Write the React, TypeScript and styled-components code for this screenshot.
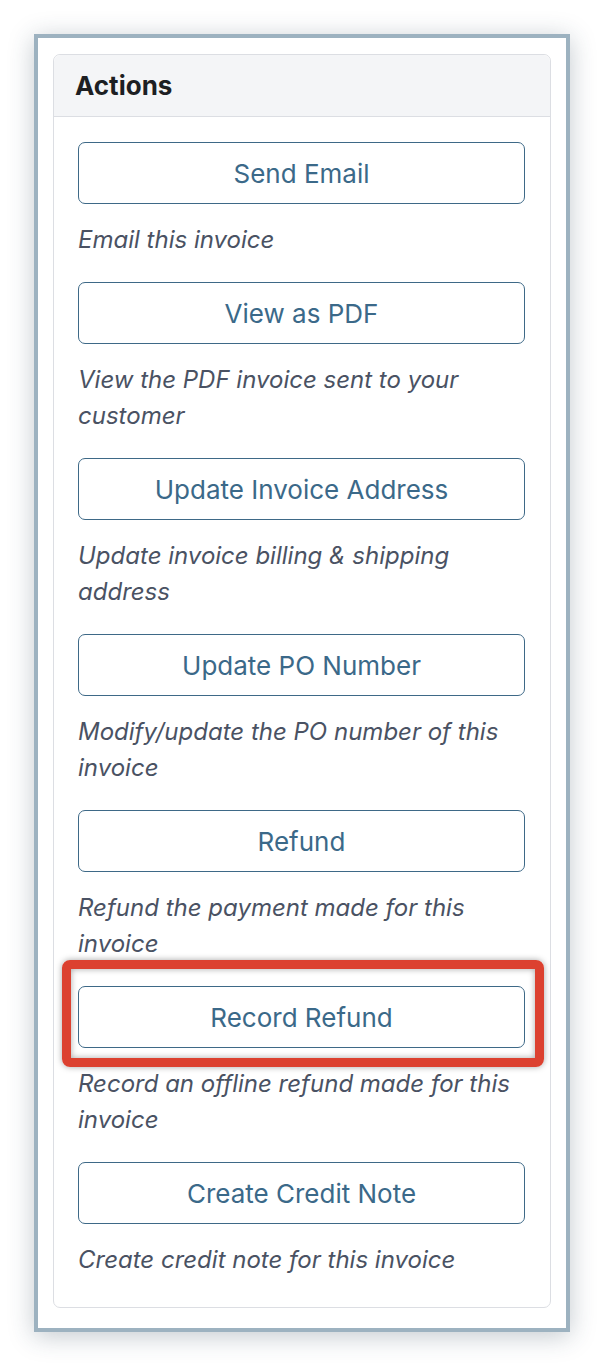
import React from 'react';
import styled, { createGlobalStyle } from 'styled-components';

const GlobalStyle = createGlobalStyle`
  html, body {
    margin: 0;
    padding: 0;
    background: #ffffff;
  }
  body {
    font-family: Inter, "Noto Sans", "Liberation Sans", sans-serif;
    -webkit-font-smoothing: antialiased;
  }
`;

const Page = styled.div`
  padding: 34px;
  width: 536px;
`;

const Frame = styled.div`
  border: 4px solid #9db2c0;
  background: #ffffff;
  padding: 16px 15px 20px 15px;
  box-shadow: 0 4px 24px rgba(40, 60, 80, 0.28);
`;

const Card = styled.section`
  border: 1px solid #dcdee3;
  border-radius: 7px;
  background: #ffffff;
`;

const Header = styled.header`
  height: 61px;
  display: flex;
  align-items: center;
  padding: 0 21px;
  background: #f4f5f7;
  border-bottom: 1px solid #dcdee3;
  border-radius: 7px 7px 0 0;
`;

const Title = styled.h2`
  margin: 0;
  font-size: 26px;
  font-weight: 700;
  color: #1d1f23;
`;

const Body = styled.div`
  display: flex;
  flex-direction: column;
  padding: 25px 25px 5px 24px;
`;

const Item = styled.div`
  display: flex;
  flex-direction: column;
`;

const ButtonWrap = styled.div`
  position: relative;
`;

const ActionButton = styled.button`
  display: block;
  width: 100%;
  height: 62px;
  border: 1.5px solid #3e6987;
  border-radius: 7px;
  background: #ffffff;
  color: #3b6989;
  font-family: inherit;
  font-size: 26px;
  font-weight: 400;
  cursor: pointer;
`;

const Highlight = styled.span`
  position: absolute;
  top: -26px;
  left: -16px;
  right: -19px;
  bottom: -19px;
  border: 9px solid #dc4130;
  border-radius: 8px;
  box-shadow: 0 0 6px rgba(0, 0, 0, 0.35), inset 0 0 6px rgba(0, 0, 0, 0.35);
  pointer-events: none;
`;

const Description = styled.p`
  margin: 18px 0 24px 0;
  font-size: 24px;
  line-height: 36px;
  font-style: italic;
  color: #4a5263;
`;

type Action = {
  label: string;
  description: string;
  highlighted?: boolean;
};

const actions: Action[] = [
  { label: 'Send Email', description: 'Email this invoice' },
  { label: 'View as PDF', description: 'View the PDF invoice sent to your customer' },
  { label: 'Update Invoice Address', description: 'Update invoice billing & shipping address' },
  { label: 'Update PO Number', description: 'Modify/update the PO number of this invoice' },
  { label: 'Refund', description: 'Refund the payment made for this invoice' },
  { label: 'Record Refund', description: 'Record an offline refund made for this invoice', highlighted: true },
  { label: 'Create Credit Note', description: 'Create credit note for this invoice' },
];

const App: React.FC = () => {
  return (
    <>
      <GlobalStyle />
      <Page>
        <Frame>
          <Card>
            <Header>
              <Title>Actions</Title>
            </Header>
            <Body>
              {actions.map((action) => (
                <Item key={action.label}>
                  <ButtonWrap>
                    <ActionButton type="button">{action.label}</ActionButton>
                    {action.highlighted && <Highlight />}
                  </ButtonWrap>
                  <Description>{action.description}</Description>
                </Item>
              ))}
            </Body>
          </Card>
        </Frame>
      </Page>
    </>
  );
};

export default App;
